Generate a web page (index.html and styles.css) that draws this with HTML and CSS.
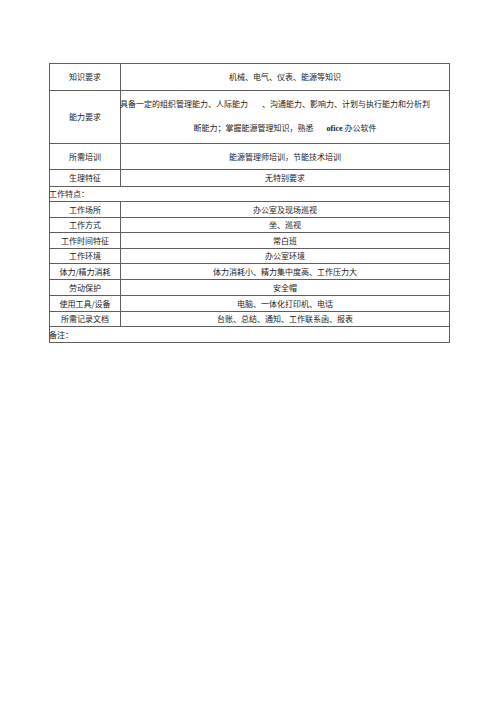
FILE: index.html
```html
<!DOCTYPE html>
<html lang="zh-CN">
<head>
<meta charset="utf-8">
<title>岗位说明书</title>
<link rel="stylesheet" href="styles.css">
</head>
<body>
<div class="sheet">
  <div class="row h27"><div class="label">知识要求</div><div class="value">机械、电气、仪表、能源等知识</div></div>
  <div class="row h53">
    <div class="label">能力要求</div>
    <div class="value multi">
      <div class="line first">具备一定的组织管理能力、人际能力<span class="gap g15"></span>、沟通能力、影响力、计划与执行能力和分析判</div>
      <div class="line second">断能力；掌握能源管理知识，熟悉<span class="gap g13"></span><b class="latin">ofice</b> 办公软件</div>
    </div>
  </div>
  <div class="row h26"><div class="label">所需培训</div><div class="value">能源管理师培训，节能技术培训</div></div>
  <div class="row h17"><div class="label">生理特征</div><div class="value">无特别要求</div></div>
  <div class="row section h15"><div class="full">工作特点：</div></div>
  <div class="row h16"><div class="label">工作场所</div><div class="value">办公室及现场巡视</div></div>
  <div class="row h15"><div class="label">工作方式</div><div class="value">坐、巡视</div></div>
  <div class="row h16"><div class="label">工作时间特征</div><div class="value">常白班</div></div>
  <div class="row h15"><div class="label">工作环境</div><div class="value">办公室环境</div></div>
  <div class="row h16"><div class="label">体力/精力消耗</div><div class="value">体力消耗小、精力集中度高、工作压力大</div></div>
  <div class="row h16"><div class="label">劳动保护</div><div class="value">安全帽</div></div>
  <div class="row h16"><div class="label">使用工具/设备</div><div class="value">电脑、一体化打印机、电话</div></div>
  <div class="row h15"><div class="label">所需记录文档</div><div class="value">台账、总结、通知、工作联系函、报表</div></div>
  <div class="row section h16"><div class="full">备注：</div></div>
</div>
</body>
</html>
```
FILE: styles.css
```css
html, body {
  margin: 0;
  padding: 0;
  background: #ffffff;
}
body {
  font-family: "Noto Sans CJK SC", "Liberation Sans", sans-serif;
  font-size: 8px;
  line-height: 1;
  color: #1a1a1a;
}
.sheet {
  margin: 63px 0 0 49px;
  width: 401px;
  box-sizing: border-box;
  border: 1px solid #5e5e5e;
  border-bottom: none;
}
.row {
  display: grid;
  grid-template-columns: 71px 1fr;
  box-sizing: border-box;
  border-bottom: 1px solid #5e5e5e;
}
.row.section {
  grid-template-columns: 1fr;
}
.h15 { height: 15px; }
.h16 { height: 16px; }
.h17 { height: 17px; }
.h26 { height: 26px; }
.h27 { height: 27px; }
.h53 { height: 53px; }
.label {
  display: flex;
  align-items: center;
  justify-content: center;
  border-right: 1px solid #5e5e5e;
  white-space: nowrap;
}
.value {
  display: flex;
  align-items: center;
  justify-content: center;
  white-space: nowrap;
}
.value.multi {
  flex-direction: column;
  align-items: stretch;
  justify-content: flex-start;
  padding-top: 9px;
  gap: 16px;
}
.line.first {
  text-align: left;
  margin-left: -1px;
}
.line.second {
  text-align: center;
}
.gap {
  display: inline-block;
}
.g15 { width: 14px; }
.g13 { width: 13px; }
.latin {
  font-family: "Liberation Serif", serif;
  font-weight: bold;
  font-size: 8px;
}
.full {
  display: flex;
  align-items: center;
  margin-left: -1px;
  white-space: nowrap;
}
```
